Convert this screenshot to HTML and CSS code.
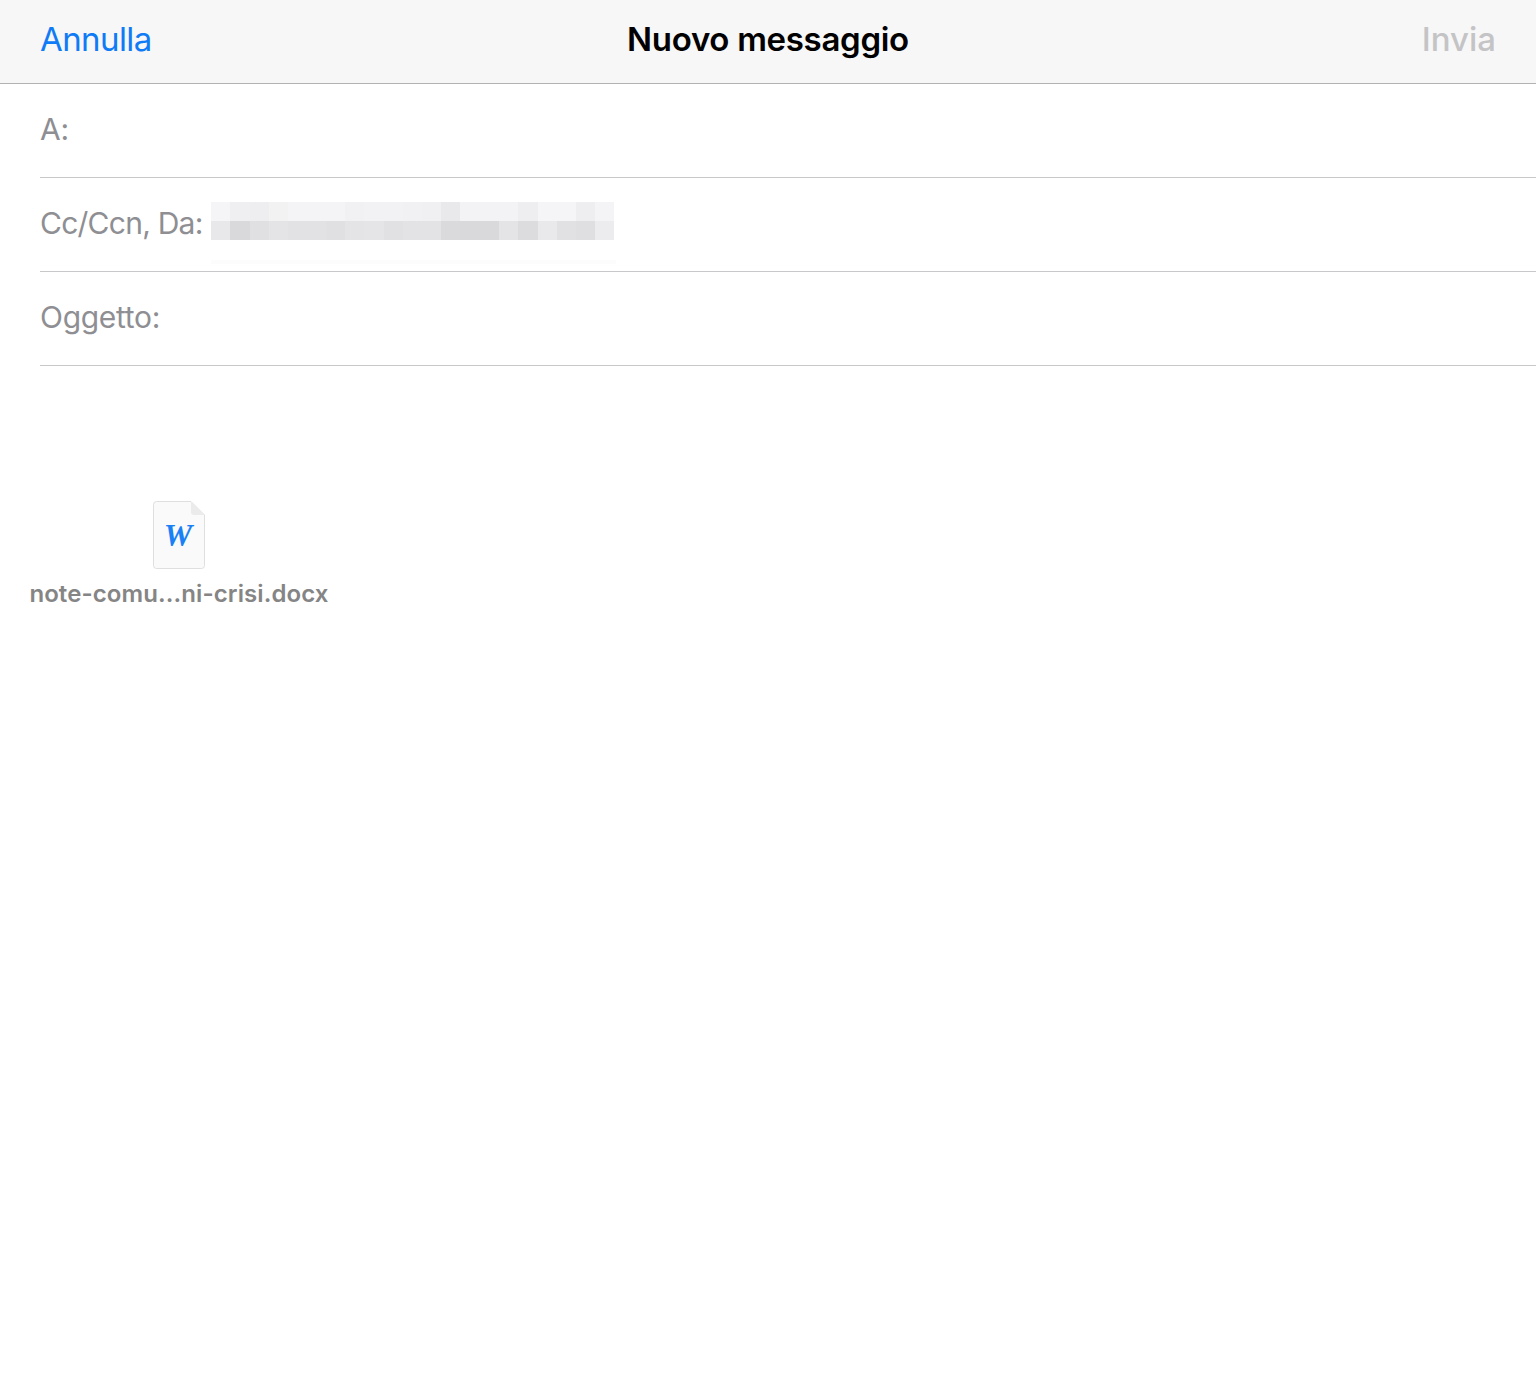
FILE: index.html
```html
<!DOCTYPE html>
<html lang="it">
<head>
<meta charset="utf-8">
<title>Nuovo messaggio</title>
<link rel="stylesheet" href="styles.css">
</head>
<body>
<header class="nav">
  <span class="nav-side cancel">Annulla</span>
  <h1 class="nav-title">Nuovo messaggio</h1>
  <span class="nav-side send">Invia</span>
</header>
<section class="fields">
  <div class="field"><span class="label">A:</span></div>
  <div class="field">
    <span class="label label-long">Cc/Ccn, Da:</span>
    <span class="redacted"></span>
    <span class="redacted-ghost"></span>
  </div>
  <div class="field"><span class="label">Oggetto:</span></div>
</section>
<main class="body">
  <figure class="attachment">
    <svg class="doc" viewBox="0 0 53 69" width="53" height="69" aria-hidden="true">
      <path class="doc-sheet" d="M3.500.5H38L51.500 14V64.500a3 3 0 0 1-3 3H3.500a3 3 0 0 1-3-3V3.500a3 3 0 0 1 3-3z"/>
      <path class="doc-fold" d="M38 .5L51.500 14H41a3 3 0 0 1-3-3z"/>
      <text class="doc-letter" x="25" y="45" text-anchor="middle">W</text>
    </svg>
    <figcaption class="filename">note-comu...ni-crisi.docx</figcaption>
  </figure>
</main>
</body>
</html>
```
FILE: styles.css
```css
* { box-sizing: border-box; }
html, body { margin: 0; padding: 0; background: #fff; }
body {
  width: 1536px;
  height: 1396px;
  overflow: hidden;
  font-family: Inter, "Liberation Sans", sans-serif;
}
.nav {
  height: 84px;
  background: #f7f7f7;
  border-bottom: 1px solid #b2b2b2;
  display: grid;
  grid-template-columns: 1fr auto 1fr;
  align-items: center;
  padding: 0 40px 6px 40px;
}
.nav-side { font-size: 33px; line-height: 40px; letter-spacing: -0.6px; }
.cancel { color: #107bf6; justify-self: start; }
.send { color: #c4c4c6; font-weight: 500; justify-self: end; letter-spacing: 0; }
.nav-title {
  margin: 0;
  font-size: 33px;
  line-height: 40px;
  font-weight: 600;
  color: #000;
  letter-spacing: -0.3px;
}
.fields { padding-left: 40px; }
.field {
  position: relative;
  height: 94px;
  border-bottom: 1px solid #c8c8cb;
  display: flex;
  align-items: center;
  padding-bottom: 3px;
}
.label {
  font-size: 30px;
  line-height: 36px;
  color: #8e8e93;
  letter-spacing: -0.3px;
}
.label-long { letter-spacing: -0.75px; }
.redacted {
  position: absolute;
  left: 171px;
  top: 24px;
  width: 403px;
  height: 38px;
  background:
    linear-gradient(90deg,
      #f5f5f7 0 19px, #efeff1 19px 39px, #eeeef0 39px 58px, #f2f2f3 58px 77px,
      #f4f4f6 77px 134px, #f1f1f3 134px 153px, #f2f2f4 153px 192px, #f1f1f3 192px 211px,
      #f0f0f3 211px 230px, #e9e9ec 230px 249px, #f3f3f5 249px 307px, #eeeef0 307px 327px,
      #f5f5f7 327px 365px, #eeeef1 365px 384px, #f4f4f6 384px 403px) top / 100% 19px no-repeat,
    linear-gradient(90deg,
      #e8e8eb 0 19px, #d9d9dc 19px 39px, #e0e0e3 39px 58px, #e4e4e7 58px 77px,
      #e2e2e4 77px 115px, #e0e0e2 115px 134px, #e4e4e6 134px 153px, #e5e5e7 153px 173px,
      #e1e1e4 173px 192px, #e3e3e5 192px 230px, #dadadd 230px 249px, #d9d9dc 249px 288px,
      #e4e4e6 288px 307px, #dcdcdf 307px 327px, #e9e9ec 327px 346px,
      #e1e1e4 346px 365px, #dfdfe2 365px 384px, #ececee 384px 403px) bottom / 100% 19px no-repeat;
}
.redacted-ghost {
  position: absolute;
  left: 171px;
  top: 82px;
  width: 405px;
  height: 4px;
  background: #fcfcfc;
}
.body { padding: 135px 0 0 30px; }
.attachment {
  margin: 0;
  width: 298px;
  display: flex;
  flex-direction: column;
  align-items: center;
}
.doc { display: block; margin-left: 1px; }
.doc-sheet { fill: #fafafa; stroke: #dfdfdf; stroke-width: 1; }
.doc-fold { fill: #ebebeb; }
.doc-letter {
  font-family: "Liberation Serif", serif;
  font-size: 32px;
  font-weight: 700;
  font-style: italic;
  fill: #1a80f5;
}
.filename {
  margin-top: 8px;
  font-size: 24px;
  line-height: 32px;
  font-weight: 600;
  color: #858585;
  letter-spacing: 0.1px;
  white-space: nowrap;
}
```
